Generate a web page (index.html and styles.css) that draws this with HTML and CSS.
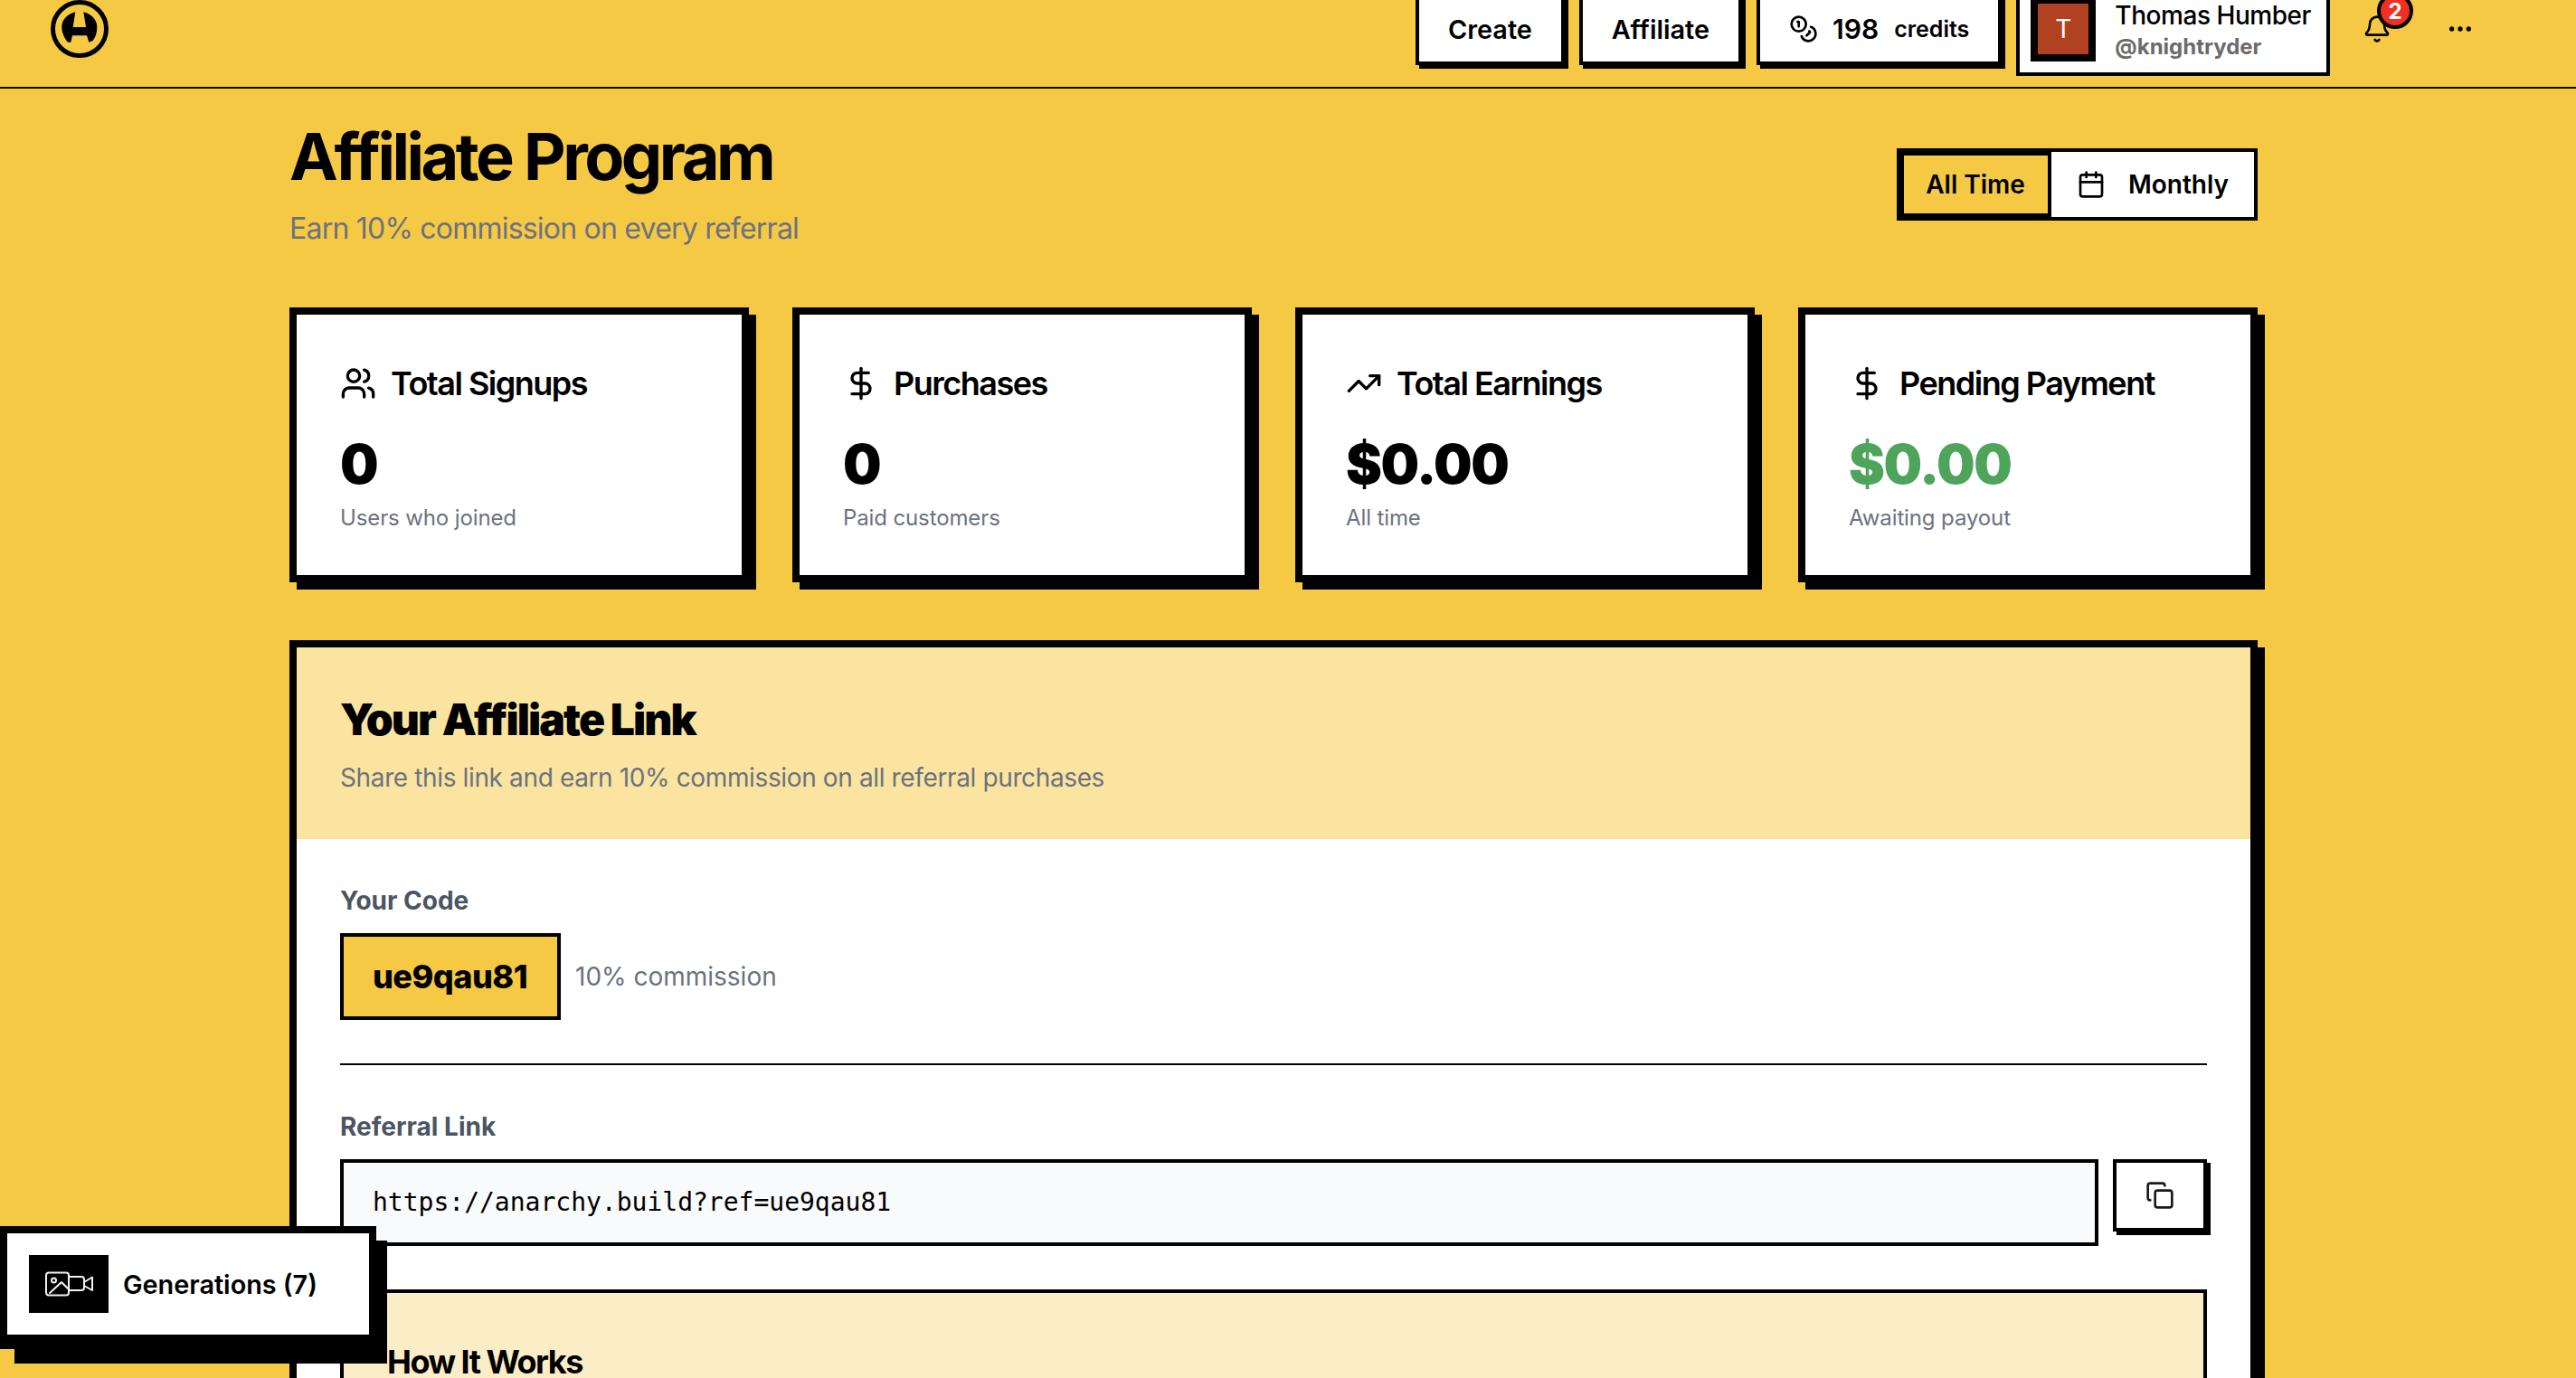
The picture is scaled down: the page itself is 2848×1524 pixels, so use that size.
FILE: index.html
```html
<!DOCTYPE html>
<html lang="en">
<head>
<meta charset="utf-8">
<title>Affiliate Program</title>
<link rel="stylesheet" href="styles.css">
</head>
<body>
<header class="nav">
  <svg class="logo" viewBox="0 0 64 64" aria-label="Logo"><circle cx="32" cy="32" r="29.5" fill="none" stroke="#000" stroke-width="5"/><path d="M27.3 13.3C18 15.5 12.3 22 12.3 30C12.3 36 15 42 19 46.7L22.3 46.7L24 39.3L40 39.3L42.3 46.7L46.7 45C49.8 41 51.3 36 51.3 30C51.3 22 45.5 15.5 36.3 13.3L39 30L24.7 30Z" fill="#000"/></svg>
  <div class="nav-actions">
    <a class="nav-btn">Create</a>
    <a class="nav-btn">Affiliate</a>
    <a class="nav-btn credits">
      <svg class="icon i32" viewBox="0 0 24 24"><circle cx="8" cy="8" r="6"/><path d="M18.09 10.37A6 6 0 1 1 10.34 18"/><path d="M7 6h1v4"/><path d="m16.71 13.88.7.71-2.82 2.82"/></svg>
      <span class="credit-num">198</span><span class="credit-word">credits</span>
    </a>
    <div class="user">
      <div class="avatar">T</div>
      <div class="user-text">
        <div class="user-name">Thomas Humber</div>
        <div class="user-handle">@knightryder</div>
      </div>
    </div>
    <div class="bell">
      <svg class="icon i32" viewBox="0 0 24 24"><path d="M10.268 21a2 2 0 0 0 3.464 0"/><path d="M3.262 15.326A1 1 0 0 0 4 17h16a1 1 0 0 0 .74-1.673C19.41 13.956 18 12.499 18 8A6 6 0 0 0 6 8c0 4.499-1.411 5.956-2.738 7.326"/></svg>
      <span class="badge">2</span>
    </div>
    <svg class="icon i32 more" viewBox="0 0 24 24"><circle cx="12" cy="12" r="1"/><circle cx="19" cy="12" r="1"/><circle cx="5" cy="12" r="1"/></svg>
  </div>
</header>

<main class="page">
  <section class="head">
    <div class="head-text">
      <h1 class="title">Affiliate Program</h1>
      <p class="subtitle">Earn 10% commission on every referral</p>
    </div>
    <div class="toggle">
      <button class="toggle-btn active">All Time</button>
      <button class="toggle-btn">
        <svg class="icon i32" viewBox="0 0 24 24"><path d="M8 2v4"/><path d="M16 2v4"/><rect width="18" height="18" x="3" y="4" rx="2"/><path d="M3 10h18"/></svg>
        Monthly
      </button>
    </div>
  </section>

  <section class="stats">
    <article class="stat">
      <div class="stat-title"><svg class="icon i40" viewBox="0 0 24 24"><path d="M16 21v-2a4 4 0 0 0-4-4H6a4 4 0 0 0-4 4v2"/><circle cx="9" cy="7" r="4"/><path d="M22 21v-2a4 4 0 0 0-3-3.87"/><path d="M16 3.13a4 4 0 0 1 0 7.75"/></svg>Total Signups</div>
      <div class="stat-value">0</div>
      <div class="stat-sub">Users who joined</div>
    </article>
    <article class="stat">
      <div class="stat-title"><svg class="icon i40" viewBox="0 0 24 24"><line x1="12" x2="12" y1="2" y2="22"/><path d="M17 5H9.5a3.5 3.5 0 0 0 0 7h5a3.5 3.5 0 0 1 0 7H6"/></svg>Purchases</div>
      <div class="stat-value">0</div>
      <div class="stat-sub">Paid customers</div>
    </article>
    <article class="stat">
      <div class="stat-title"><svg class="icon i40" viewBox="0 0 24 24"><polyline points="22 7 13.5 15.5 8.5 10.5 2 17"/><polyline points="16 7 22 7 22 13"/></svg>Total Earnings</div>
      <div class="stat-value">$0.00</div>
      <div class="stat-sub">All time</div>
    </article>
    <article class="stat">
      <div class="stat-title"><svg class="icon i40" viewBox="0 0 24 24"><line x1="12" x2="12" y1="2" y2="22"/><path d="M17 5H9.5a3.5 3.5 0 0 0 0 7h5a3.5 3.5 0 0 1 0 7H6"/></svg>Pending Payment</div>
      <div class="stat-value green">$0.00</div>
      <div class="stat-sub">Awaiting payout</div>
    </article>
  </section>

  <section class="panel">
    <div class="panel-head">
      <h2 class="panel-title">Your Affiliate Link</h2>
      <p class="panel-sub">Share this link and earn 10% commission on all referral purchases</p>
    </div>
    <div class="panel-body">
      <div class="label">Your Code</div>
      <div class="code-row">
        <div class="code">ue9qau81</div>
        <span class="code-note">10% commission</span>
      </div>
      <hr class="divider">
      <div class="label">Referral Link</div>
      <div class="link-row">
        <div class="link-input">https://anarchy.build?ref=ue9qau81</div>
        <button class="copy-btn"><svg class="icon i32 copy" viewBox="0 0 24 24"><rect width="14" height="14" x="8" y="8" rx="2" ry="2"/><path d="M4 16c-1.1 0-2-.9-2-2V4c0-1.1.9-2 2-2h10c1.1 0 2 .9 2 2"/></svg></button>
      </div>
      <div class="how">
        <h3 class="how-title">How It Works</h3>
      </div>
    </div>
  </section>
</main>

<aside class="gens">
  <div class="gens-box">
    <div class="gens-icon">
      <svg viewBox="0 0 88 64" class="gens-svg"><rect x="19" y="19.5" width="25" height="25" rx="3"/><circle cx="27.5" cy="28" r="2.5"/><path d="M23 42L36 30L43 37"/><path d="M44 24H58a3 3 0 0 1 3 3V36a3 3 0 0 1-3 3H44"/><path d="M61 30L70 24.5V39L61 34"/></svg>
    </div>
    <span class="gens-label">Generations (7)</span>
  </div>
</aside>
</body>
</html>
```

FILE: styles.css
```css
* { box-sizing: border-box; }
html, body { height: 100%; margin: 0; overflow: hidden; }
body {
  background: #f6c945;
  color: #000;
  font-family: Inter, "Liberation Sans", sans-serif;
}
h1, h2, h3, p { margin: 0; }
button { font: inherit; color: inherit; background: none; cursor: pointer; }

.icon { fill: none; stroke: currentColor; stroke-width: 2; stroke-linecap: round; stroke-linejoin: round; flex: none; display: block; }
.i32 { width: 32px; height: 32px; }
.i40 { width: 40px; height: 40px; }

/* nav */
.nav {
  height: 98px;
  border-bottom: 2px solid #000;
  padding: 0 112px 32px 56px;
  display: flex;
  align-items: center;
  justify-content: space-between;
}
.logo { width: 64px; height: 64px; flex: none; }
.nav-actions { display: flex; align-items: center; gap: 16px; }
.nav-btn {
  height: 80px;
  padding: 0 32px;
  border: 4px solid #000;
  background: #fff;
  box-shadow: 4px 4px 0 #000;
  display: flex;
  align-items: center;
  font-size: 28.8px;
  font-weight: 600;
}
.credit-num { margin-left: 16px; font-size: 30px; }
.credit-word { margin-left: 17px; font-size: 25px; }
.user {
  height: 104px;
  border: 4px solid #000;
  background: #fff;
  padding: 12px 17px 12px 12px;
  display: flex;
  align-items: center;
  gap: 21px;
}
.avatar {
  width: 72px;
  height: 72px;
  border: 8px solid #000;
  background: #b14221;
  color: #fff;
  font-size: 28px;
  display: flex;
  align-items: center;
  justify-content: center;
}
.user-text { padding-top: 3px; }
.user-name { font-size: 28px; font-weight: 500; line-height: 36px; letter-spacing: -0.45px; white-space: nowrap; }
.user-handle { font-size: 24px; font-weight: 700; line-height: 34px; color: #6b6b6b; }
.bell { position: relative; margin-left: 20px; }
.badge {
  position: absolute;
  left: 16px;
  top: -24px;
  width: 40px;
  height: 40px;
  border: 4px solid #000;
  border-radius: 50%;
  background: #ee3124;
  color: #fff;
  font-size: 24px;
  font-weight: 700;
  display: flex;
  align-items: center;
  justify-content: center;
}
.more { margin-left: 44px; fill: currentColor; }

/* page */
.page { width: 2176px; margin-left: 320px; padding-top: 33px; }
.head { display: flex; align-items: center; justify-content: space-between; margin-bottom: 63px; }
.head-text { padding-top: 2px; }
.title { font-size: 72px; line-height: 80px; font-weight: 700; letter-spacing: -3.5px; margin-bottom: 16px; }
.subtitle { font-size: 32px; line-height: 48px; letter-spacing: -0.78px; color: #6b7280; }

.toggle { display: flex; border: 4px solid #000; background: #fff; }
.toggle-btn {
  height: 72px;
  border: 0;
  padding: 0 28px;
  display: flex;
  align-items: center;
  gap: 25px;
  font-size: 28px;
  font-weight: 600;
  background: #fff;
}
.toggle-btn.active { border: 4px solid #000; background: #f6c945; padding: 0 25px 0 24px; }

.stats { display: grid; grid-template-columns: repeat(4, 1fr); gap: 48px; margin-bottom: 64px; }
.stat { border: 8px solid #000; background: #fff; box-shadow: 8px 8px 0 #000; padding: 48px 48px 47px; }
.stat-title {
  display: flex;
  align-items: center;
  gap: 16px;
  font-size: 36px;
  line-height: 56px;
  font-weight: 600;
  letter-spacing: -1.5px;
  margin-bottom: 25px;
}
.stat-value { font-size: 60px; line-height: 72px; font-weight: 900; letter-spacing: -1.4px; margin-bottom: 8px; }
.stat-value.green { color: #4da45a; }
.stat-sub { font-size: 24px; line-height: 32px; letter-spacing: -0.12px; color: #6b7280; }

.panel { border: 8px solid #000; background: #fff; box-shadow: 8px 8px 0 #000; }
.panel-head { background: #fae49f; padding: 48px; }
.panel-title { font-size: 48px; line-height: 64px; font-weight: 900; letter-spacing: -1.9px; margin-bottom: 12px; }
.panel-sub { font-size: 28px; line-height: 40px; letter-spacing: -0.37px; color: #6b7280; }
.panel-body { padding: 48px; }
.label { font-size: 28px; line-height: 40px; font-weight: 700; letter-spacing: 0; color: #4b5563; margin-bottom: 16px; }
.code-row { display: flex; align-items: center; gap: 16px; }
.code { border: 4px solid #000; background: #f6c945; height: 96px; width: 244px; padding: 0 32px; display: flex; align-items: center; font-size: 36px; font-weight: 800; letter-spacing: -0.5px; white-space: nowrap; }
.code-note { font-size: 28px; color: #6b7280; }
.divider { border: 0; height: 2px; background: #000; margin: 48px 0; }
.link-row { display: flex; align-items: flex-start; gap: 16px; margin-bottom: 48px; }
.link-input {
  flex: 1;
  height: 96px;
  border: 4px solid #000;
  background: #f9fafb;
  padding: 0 32px 2px;
  display: flex;
  align-items: center;
  font-family: "DejaVu Sans Mono", monospace;
  font-size: 28px;
}
.copy-btn {
  width: 104px;
  height: 80px;
  border: 4px solid #000;
  background: #fff;
  box-shadow: 4px 4px 0 #000;
  display: flex;
  align-items: center;
  justify-content: center;
  padding: 0;
}
.copy { color: #1a1a1a; }
.how { border: 4px solid #000; background: #fbedc5; padding: 48px; height: 300px; }
.how-title { font-size: 36px; line-height: 56px; font-weight: 700; letter-spacing: -1.5px; }

/* floating generations tab */
.gens {
  position: fixed;
  left: 0;
  top: 1356px;
  width: 416px;
  height: 136px;
}
.gens::before {
  content: "";
  position: absolute;
  left: 16px;
  right: -12px;
  top: 16px;
  bottom: -16px;
  background: #000;
}
.gens-box {
  position: relative;
  height: 100%;
  border: 8px solid #000;
  border-bottom-width: 16px;
  background: #fff;
  display: flex;
  align-items: center;
  gap: 16px;
  padding-left: 24px;
}
.gens-icon { width: 88px; height: 64px; background: #000; flex: none; }
.gens-svg { display: block; width: 88px; height: 64px; fill: none; stroke: #f2f2f2; stroke-width: 2; stroke-linejoin: round; stroke-linecap: round; }
.gens-label { font-size: 28.8px; font-weight: 600; white-space: nowrap; }
```
